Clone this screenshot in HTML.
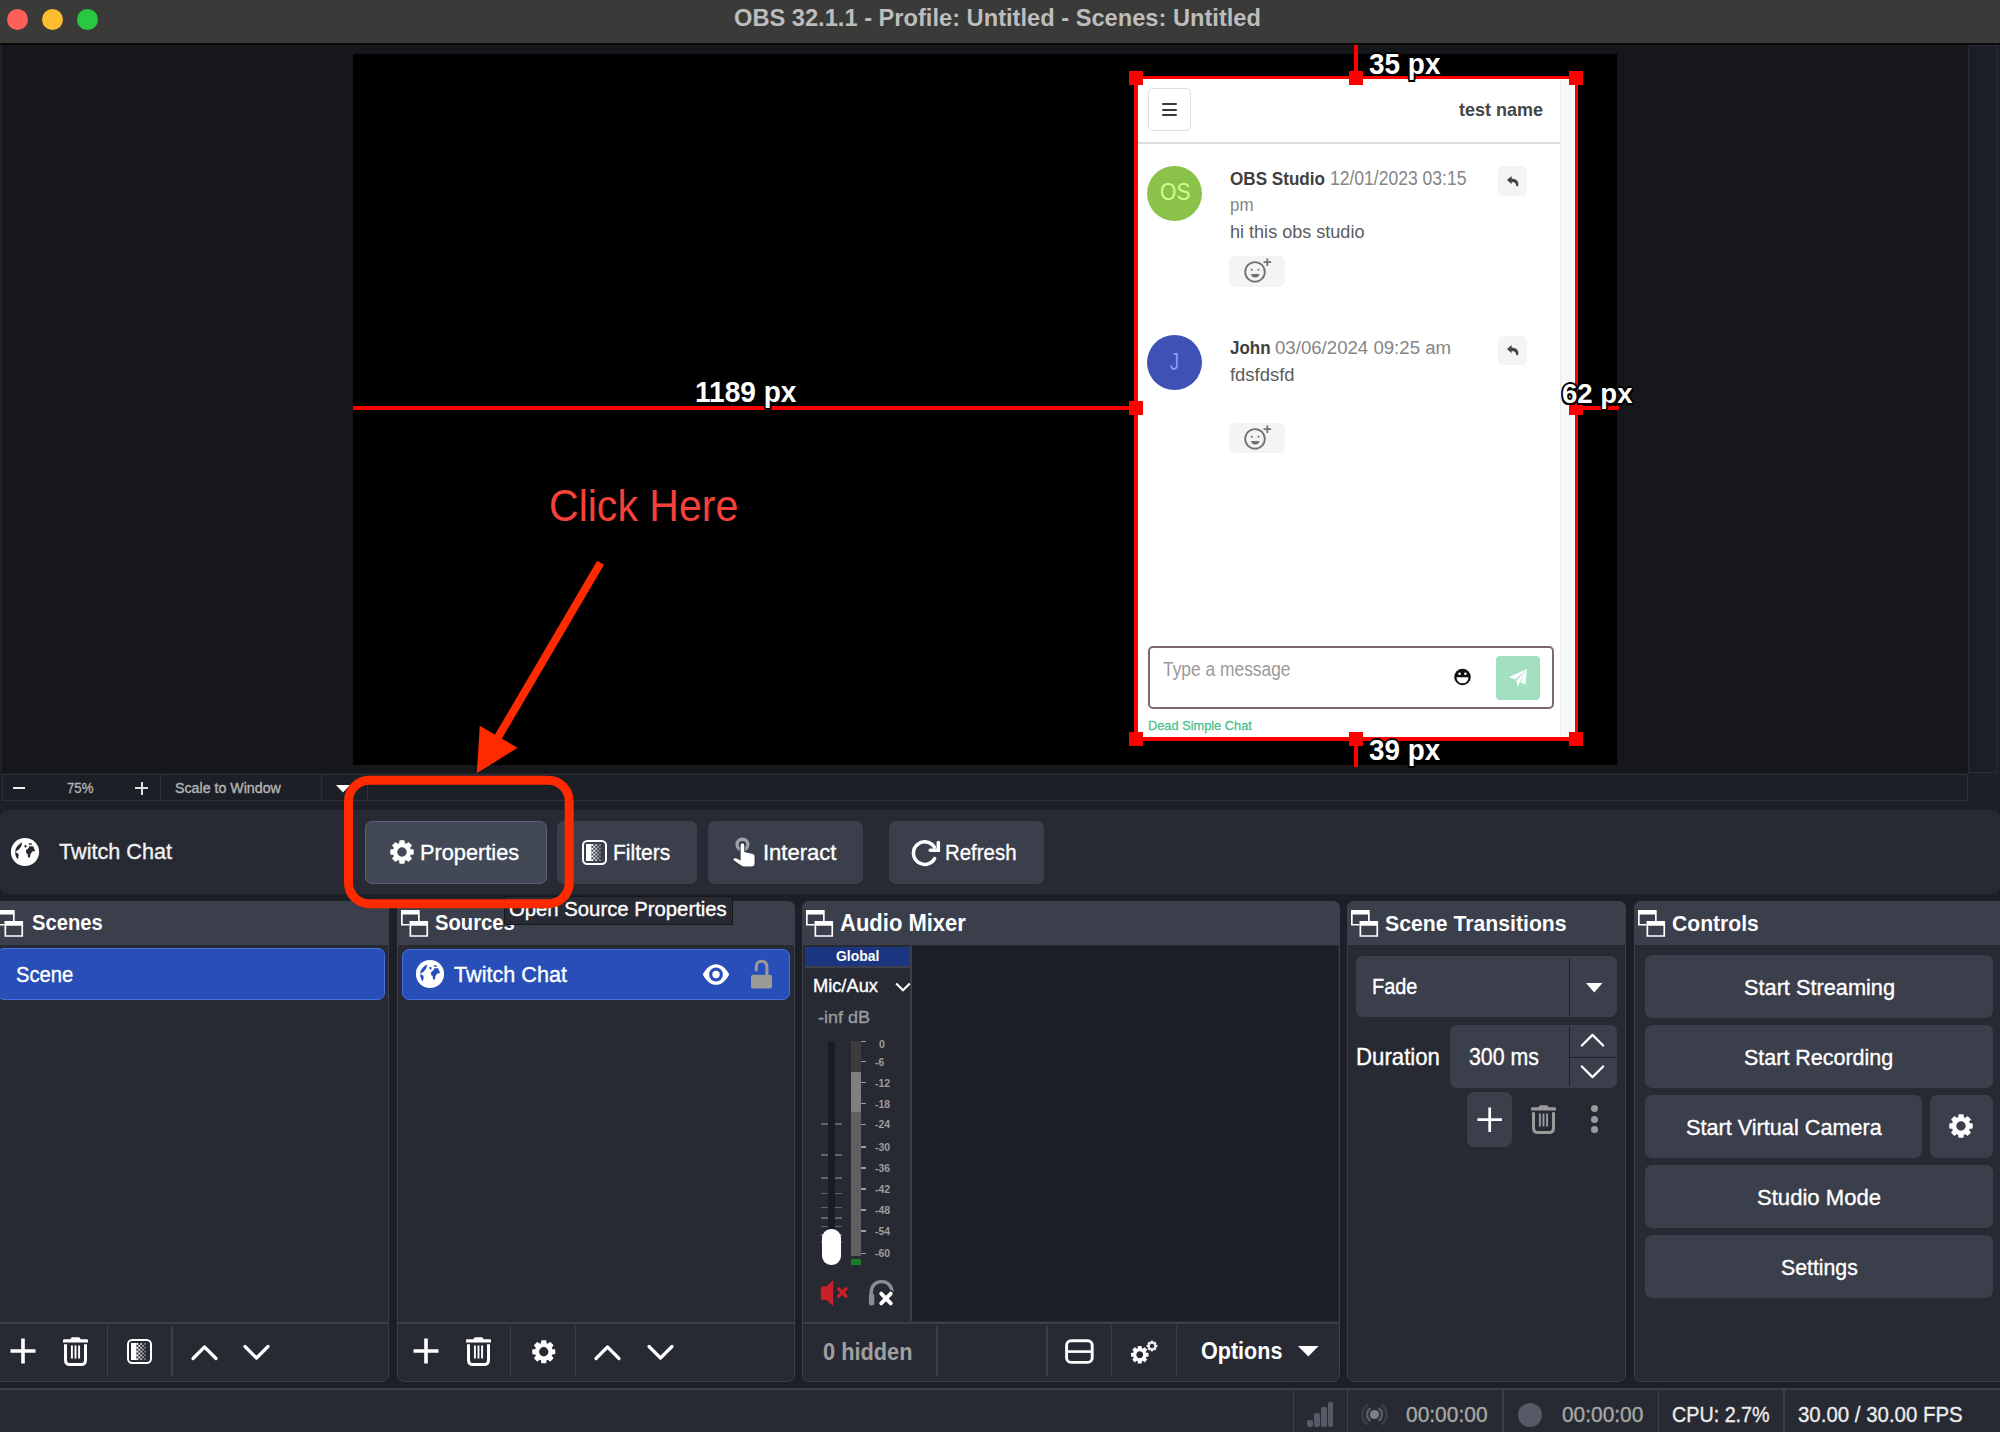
<!DOCTYPE html>
<html><head><meta charset="utf-8"><style>
*{box-sizing:border-box;margin:0;padding:0}
html,body{width:2000px;height:1432px;overflow:hidden;background:#1d1f26;font-family:"Liberation Sans",sans-serif;color:#fff}
.a{position:absolute}
.t{position:absolute;white-space:pre;line-height:0;transform-origin:0 0}
svg{position:absolute;overflow:visible}
.ui{-webkit-text-stroke:0.35px currentColor}
</style></head><body>
<div class="a" style="left:0px;top:0px;width:2000px;height:43px;background:#3a3a39;"></div>
<div class="a" style="left:0px;top:43px;width:2000px;height:2px;background:#0a0a0b;"></div>
<div class="a" style="left:7.0px;top:8.5px;width:21px;height:21px;border-radius:50%;background:#fe5f57"></div>
<div class="a" style="left:42.0px;top:8.5px;width:21px;height:21px;border-radius:50%;background:#febc2e"></div>
<div class="a" style="left:77.0px;top:8.5px;width:21px;height:21px;border-radius:50%;background:#28c840"></div>
<div class="t " style="left:734.00px;top:17.79px;font-size:23.40px;font-weight:bold;color:#bdbdbd;transform:scaleX(1.0110);">OBS 32.1.1 - Profile: Untitled - Scenes: Untitled</div>
<div class="a" style="left:0px;top:45px;width:1968px;height:728px;background:#16171b;"></div>
<div class="a" style="left:0px;top:45px;width:2px;height:728px;background:#1f2128;"></div>
<div class="a" style="left:1968px;top:45px;width:29px;height:728px;background:#1c1e25;border:1px solid #2a2c35;"></div>
<div class="a" style="left:353px;top:54px;width:1264px;height:711px;background:#000;"></div>
<div class="a" style="left:1138px;top:79px;width:437px;height:658.5px;background:#ffffff;"></div>
<div class="a" style="left:1560px;top:79px;width:15px;height:658.5px;background:#f7f7f7;border-left:1px solid #ebebeb;"></div>
<div class="a" style="left:1148px;top:88px;width:43px;height:43px;background:#fff;border:1px solid #dedede;border-radius:5px;"></div>
<div class="a" style="left:1162px;top:102.9px;width:15px;height:2.200000000000003px;background:#383838;border-radius:1px;"></div>
<div class="a" style="left:1162px;top:108.6px;width:15px;height:2.200000000000003px;background:#383838;border-radius:1px;"></div>
<div class="a" style="left:1162px;top:114.3px;width:15px;height:2.200000000000003px;background:#383838;border-radius:1px;"></div>
<div class="t " style="left:1459.00px;top:109.77px;font-size:17.99px;font-weight:bold;color:#454545;">test name</div>
<div class="a" style="left:1138px;top:141.5px;width:422px;height:2.5px;background:#dcdcdc;"></div>
<div class="a" style="left:1147.1px;top:165.7px;width:55px;height:55px;border-radius:50%;background:#8bc34a"></div>
<div class="t " style="left:1159.50px;top:191.69px;font-size:23.98px;font-weight:normal;color:#ccff90;transform:scaleX(0.8801);">OS</div>
<div class="t " style="left:1229.50px;top:178.95px;font-size:18.90px;font-weight:bold;color:#404040;transform:scaleX(0.9051);">OBS Studio</div>
<div class="t " style="left:1330.00px;top:179.10px;font-size:19.33px;font-weight:normal;color:#858585;transform:scaleX(0.9070);">12/01/2023 03:15</div>
<div class="t " style="left:1229.50px;top:205.37px;font-size:18.56px;font-weight:normal;color:#858585;transform:scaleX(0.9109);">pm</div>
<div class="t " style="left:1229.50px;top:232.08px;font-size:18.52px;font-weight:normal;color:#5c5c5c;transform:scaleX(0.9749);">hi this obs studio</div>
<div class="a" style="left:1497.5px;top:165.8px;width:29.5px;height:30.69999999999999px;background:#f4f4f4;border-radius:5px;"></div>
<svg style="left:1505.5px;top:174.5px" width="14" height="14" viewBox="0 0 14 14"><path d="M1 5.1 L5.6 0.9 V3.5 C9.7 3.6 12.5 5.6 12.4 9.4 L11.9 11.6 L10.1 10.8 C10.3 8.4 8.7 6.9 5.6 6.9 V9.3 Z" fill="#454545"/></svg>
<div class="a" style="left:1229px;top:256.1px;width:55.5px;height:30.69999999999999px;background:#f4f4f4;border-radius:6px;"></div>
<svg style="left:1244px;top:256.5px" width="32" height="28" viewBox="0 0 32 28"><circle cx="11" cy="14.9" r="9.8" fill="none" stroke="#727272" stroke-width="1.8"/><circle cx="7.8" cy="12.8" r="1.05" fill="#727272"/><circle cx="14.5" cy="12.8" r="1.05" fill="#727272"/><path d="M7.1 17.1 H15.4 Q15.2 20.6 11.25 20.6 Q7.3 20.6 7.1 17.1 Z" fill="#727272"/><path d="M23.3 1.4 V9 M19.5 5.2 H27.1" stroke="#727272" stroke-width="1.8"/></svg>
<div class="a" style="left:1147.1px;top:335.3px;width:55px;height:55px;border-radius:50%;background:#3f51b5"></div>
<div class="t " style="left:1170.00px;top:361.69px;font-size:23.98px;font-weight:normal;color:#8c9eff;transform:scaleX(0.7505);">J</div>
<div class="t " style="left:1229.50px;top:348.35px;font-size:19.19px;font-weight:bold;color:#404040;transform:scaleX(0.8832);">John</div>
<div class="t " style="left:1275.00px;top:348.35px;font-size:19.19px;font-weight:normal;color:#858585;transform:scaleX(0.9707);">03/06/2024 09:25 am</div>
<div class="a" style="left:1497.5px;top:335.6px;width:29.5px;height:29.0px;background:#f4f4f4;border-radius:5px;"></div>
<svg style="left:1505.5px;top:343.5px" width="14" height="14" viewBox="0 0 14 14"><path d="M1 5.1 L5.6 0.9 V3.5 C9.7 3.6 12.5 5.6 12.4 9.4 L11.9 11.6 L10.1 10.8 C10.3 8.4 8.7 6.9 5.6 6.9 V9.3 Z" fill="#454545"/></svg>
<div class="t " style="left:1229.50px;top:375.08px;font-size:18.52px;font-weight:normal;color:#5c5c5c;transform:scaleX(0.9951);">fdsfdsfd</div>
<div class="a" style="left:1229px;top:423.2px;width:55.5px;height:30.100000000000023px;background:#f4f4f4;border-radius:6px;"></div>
<svg style="left:1244px;top:423.6px" width="32" height="28" viewBox="0 0 32 28"><circle cx="11" cy="14.9" r="9.8" fill="none" stroke="#727272" stroke-width="1.8"/><circle cx="7.8" cy="12.8" r="1.05" fill="#727272"/><circle cx="14.5" cy="12.8" r="1.05" fill="#727272"/><path d="M7.1 17.1 H15.4 Q15.2 20.6 11.25 20.6 Q7.3 20.6 7.1 17.1 Z" fill="#727272"/><path d="M23.3 1.4 V9 M19.5 5.2 H27.1" stroke="#727272" stroke-width="1.8"/></svg>
<div class="a" style="left:1148px;top:645.7px;width:406px;height:63.299999999999955px;background:#fff;border:2px solid #7d6b6b;border-radius:5px;"></div>
<div class="t " style="left:1162.70px;top:668.95px;font-size:20.35px;font-weight:normal;color:#9a9a9a;transform:scaleX(0.8543);">Type a message</div>
<svg style="left:1453px;top:668px" width="19" height="18" viewBox="0 0 19 18"><circle cx="9.5" cy="9" r="8.3" fill="#111"/><path d="M3.5 9.2 H15.5 Q15 15.2 9.5 15.2 Q4 15.2 3.5 9.2Z" fill="#fff"/><circle cx="6.6" cy="5.8" r="1.3" fill="#fff"/><circle cx="12.4" cy="5.8" r="1.3" fill="#fff"/></svg>
<div class="a" style="left:1496px;top:656px;width:44px;height:44px;background:#a3e0c2;border-radius:4px;"></div>
<svg style="left:1508px;top:668px" width="20" height="20" viewBox="0 0 20 20"><path d="M19 1 L1 9 L7 11.5 Z M19 1 L8.5 12.5 L9.5 19 L12 14 Z M19 1 L12.5 14.5 L17.5 16.5Z" fill="#fff"/></svg>
<div class="t " style="left:1148.00px;top:726.42px;font-size:12.94px;font-weight:normal;color:#4fbf8f;transform:scaleX(0.9888);-webkit-text-stroke:0.3px #4fbf8f;">Dead Simple Chat</div>
<div class="a" style="left:2px;top:773.5px;width:1966px;height:27.5px;background:#1d1f26;border:1px solid #2d303a;"></div>
<div class="a" style="left:160px;top:775px;width:1.1999999999999886px;height:25px;background:#2d303a;"></div>
<div class="a" style="left:320.5px;top:775px;width:1.1999999999999886px;height:25px;background:#2d303a;"></div>
<div class="a" style="left:367px;top:775px;width:1.1999999999999886px;height:25px;background:#2d303a;"></div>
<div class="a" style="left:13px;top:787px;width:12px;height:2px;background:#f0f0f0;"></div>
<div class="t ui" style="left:66.60px;top:787.77px;font-size:13.95px;font-weight:normal;color:#b4b4b4;transform:scaleX(0.9460);">75%</div>
<div class="a" style="left:135px;top:787px;width:13px;height:2px;background:#e0e0e0;"></div>
<div class="a" style="left:140.5px;top:781.5px;width:2.0px;height:13.0px;background:#e0e0e0;"></div>
<div class="t ui" style="left:175.00px;top:787.77px;font-size:13.95px;font-weight:normal;color:#b4b4b4;transform:scaleX(1.0197);">Scale to Window</div>
<svg style="left:336px;top:785px" width="14" height="8" viewBox="0 0 14 8"><path d="M0 0 H14 L7 7.5Z" fill="#fff"/></svg>
<div class="a" style="left:0px;top:810px;width:2000px;height:84px;background:#272a33;border-radius:8px;"></div>
<svg style="left:10.5px;top:838px" width="28" height="28" viewBox="0 0 28 28"><circle cx="14" cy="14" r="14.1" fill="#fff"/><path d="M6.8 21.5 A10.5 10.5 0 0 1 11.2 4.6 L10.2 8.4 L7.8 11.4 L4.1 14.1 L7.2 15.5 L7.7 17.6 Z" fill="#272a33"/><ellipse cx="14.5" cy="8.25" rx="1" ry="1.4" fill="#272a33"/><path d="M17.7 5.3 H20.3 L21.3 6.8 H17.9 Z" fill="#272a33"/><path d="M18 8.25 H22.2 L24.1 13 L21.3 13.55 L19.4 16.35 L19.1 19.1 L18 20 L16.85 18.6 L16.6 15.8 L15.2 15.2 L14.9 12.2 L16.3 11.3 L18 9.6 Z" fill="#272a33"/></svg>
<div class="t ui" style="left:59.40px;top:851.94px;font-size:22.09px;font-weight:normal;color:#f2f2f2;transform:scaleX(0.9806);">Twitch Chat</div>
<div class="a" style="left:365px;top:821px;width:182px;height:63px;background:#434856;border:1.5px solid #5b6176;border-radius:7px;"></div>
<svg style="left:388.6px;top:838.9px" width="26" height="26" viewBox="-14 -14 28 28"><path d="M-2.17 -8.73 L-1.95 -11.74 L1.95 -11.74 L2.17 -8.73 L4.64 -7.71 L6.92 -9.68 L9.68 -6.92 L7.71 -4.64 L8.73 -2.17 L11.74 -1.95 L11.74 1.95 L8.73 2.17 L7.71 4.64 L9.68 6.92 L6.92 9.68 L4.64 7.71 L2.17 8.73 L1.95 11.74 L-1.95 11.74 L-2.17 8.73 L-4.64 7.71 L-6.92 9.68 L-9.68 6.92 L-7.71 4.64 L-8.73 2.17 L-11.74 1.95 L-11.74 -1.95 L-8.73 -2.17 L-7.71 -4.64 L-9.68 -6.92 L-6.92 -9.68 L-4.64 -7.71Z M6.0 0 A6.0 6.0 0 1 0 -6.0 0 A6.0 6.0 0 1 0 6.0 0Z" fill="#fff" fill-rule="evenodd" stroke="#fff" stroke-width="1.8" stroke-linejoin="round"/></svg>
<div class="t ui" style="left:420.30px;top:852.29px;font-size:22.82px;font-weight:normal;color:#ffffff;transform:scaleX(0.9533);">Properties</div>
<div class="a" style="left:557px;top:821px;width:140px;height:63px;background:#3b3e4b;border-radius:7px;"></div>
<svg style="left:581.5px;top:840px" width="25" height="25" viewBox="0 0 25 25"><rect x="1" y="1" width="23" height="23" rx="4.2" fill="none" stroke="#fff" stroke-width="2"/><rect x="4" y="4" width="5.4" height="17" fill="#fff"/><rect x="9.4" y="4.0" width="1.9" height="1.9" fill="#fff" fill-opacity="1"/><rect x="13.2" y="4.0" width="1.9" height="1.9" fill="#fff" fill-opacity="0.7"/><rect x="17.0" y="4.0" width="1.9" height="1.9" fill="#fff" fill-opacity="0.35"/><rect x="11.3" y="5.9" width="1.9" height="1.9" fill="#fff" fill-opacity="0.9"/><rect x="15.1" y="5.9" width="1.9" height="1.9" fill="#fff" fill-opacity="0.5"/><rect x="9.4" y="7.8" width="1.9" height="1.9" fill="#fff" fill-opacity="1"/><rect x="13.2" y="7.8" width="1.9" height="1.9" fill="#fff" fill-opacity="0.7"/><rect x="17.0" y="7.8" width="1.9" height="1.9" fill="#fff" fill-opacity="0.35"/><rect x="11.3" y="9.7" width="1.9" height="1.9" fill="#fff" fill-opacity="0.9"/><rect x="15.1" y="9.7" width="1.9" height="1.9" fill="#fff" fill-opacity="0.5"/><rect x="9.4" y="11.6" width="1.9" height="1.9" fill="#fff" fill-opacity="1"/><rect x="13.2" y="11.6" width="1.9" height="1.9" fill="#fff" fill-opacity="0.7"/><rect x="17.0" y="11.6" width="1.9" height="1.9" fill="#fff" fill-opacity="0.35"/><rect x="11.3" y="13.5" width="1.9" height="1.9" fill="#fff" fill-opacity="0.9"/><rect x="15.1" y="13.5" width="1.9" height="1.9" fill="#fff" fill-opacity="0.5"/><rect x="9.4" y="15.4" width="1.9" height="1.9" fill="#fff" fill-opacity="1"/><rect x="13.2" y="15.4" width="1.9" height="1.9" fill="#fff" fill-opacity="0.7"/><rect x="17.0" y="15.4" width="1.9" height="1.9" fill="#fff" fill-opacity="0.35"/><rect x="11.3" y="17.3" width="1.9" height="1.9" fill="#fff" fill-opacity="0.9"/><rect x="15.1" y="17.3" width="1.9" height="1.9" fill="#fff" fill-opacity="0.5"/><rect x="9.4" y="19.2" width="1.9" height="1.9" fill="#fff" fill-opacity="1"/><rect x="13.2" y="19.2" width="1.9" height="1.9" fill="#fff" fill-opacity="0.7"/><rect x="17.0" y="19.2" width="1.9" height="1.9" fill="#fff" fill-opacity="0.35"/></svg>
<div class="t ui" style="left:612.50px;top:852.29px;font-size:22.82px;font-weight:normal;color:#ffffff;transform:scaleX(0.9232);">Filters</div>
<div class="a" style="left:707.5px;top:821px;width:155.5px;height:63px;background:#3b3e4b;border-radius:7px;"></div>
<svg style="left:732px;top:837px" width="24" height="31" viewBox="0 0 24 31"><circle cx="10.45" cy="7.6" r="5.4" fill="none" stroke="#9ea1aa" stroke-width="3.4"/><path d="M8.6 8 A1.85 1.85 0 0 1 12.3 8 V15 L21 17 Q22.6 17.4 22.6 19 V26.5 Q22.6 29.4 19.7 29.4 H11.5 Q10.2 29.4 9.2 28.6 L2 23.5 Q0.8 22.5 1.8 21.5 Q2.8 20.6 4.2 21.3 L8.6 23.5 Z" fill="#fff" stroke="#2a2d38" stroke-width="1.6" paint-order="stroke"/></svg>
<div class="t ui" style="left:762.50px;top:852.29px;font-size:22.82px;font-weight:normal;color:#ffffff;transform:scaleX(0.9658);">Interact</div>
<div class="a" style="left:889.2px;top:821px;width:155.0px;height:63px;background:#3b3e4b;border-radius:7px;"></div>
<svg style="left:910px;top:838px" width="32" height="30" viewBox="0 0 32 30"><path d="M24.4 9.2 A11.3 11.3 0 1 0 24.6 20.6" fill="none" stroke="#fff" stroke-width="3.5" stroke-linecap="round"/><path d="M20.2 12.3 H28.3 V4.6" fill="none" stroke="#fff" stroke-width="3.5" stroke-linecap="round" stroke-linejoin="miter"/></svg>
<div class="t ui" style="left:945.00px;top:852.29px;font-size:22.82px;font-weight:normal;color:#ffffff;transform:scaleX(0.8952);">Refresh</div>
<div class="a" style="left:-6.5px;top:901px;width:395.0px;height:480.5px;background:#272a33;border:1.5px solid #3b3e4b;border-radius:7px;"></div>
<div class="a" style="left:-6.5px;top:901px;width:395.0px;height:44px;background:#3b3e4b;border-radius:7px 7px 0 0;"></div>
<svg style="left:-3.5999999999999996px;top:910.3px" width="28" height="28" viewBox="0 0 28 28"><path d="M0 0 H18.7 V15.5 H0Z M1.7 4.5 V14 H17 V4.5Z" fill="#fff" fill-rule="evenodd"/><rect x="8.5" y="11.1" width="18.6" height="15.6" fill="#3b3e4b"/><path d="M8.5 11.1 H27.1 V26.7 H8.5Z M10.2 15.7 V25.2 H25.4 V15.7Z" fill="#fff" fill-rule="evenodd"/></svg>
<div class="t " style="left:31.50px;top:923.20px;font-size:21.95px;font-weight:bold;color:#fff;transform:scaleX(0.9204);">Scenes</div>
<div class="a" style="left:-3px;top:948px;width:387.5px;height:51.5px;background:#284fb8;border:1.5px solid #4570e0;border-radius:7px;"></div>
<div class="t ui" style="left:15.80px;top:973.94px;font-size:22.97px;font-weight:normal;color:#fff;transform:scaleX(0.8801);">Scene</div>
<div class="a" style="left:397px;top:901px;width:398px;height:480.5px;background:#272a33;border:1.5px solid #3b3e4b;border-radius:7px;"></div>
<div class="a" style="left:397px;top:901px;width:398px;height:44px;background:#3b3e4b;border-radius:7px 7px 0 0;"></div>
<svg style="left:400.9px;top:910.3px" width="28" height="28" viewBox="0 0 28 28"><path d="M0 0 H18.7 V15.5 H0Z M1.7 4.5 V14 H17 V4.5Z" fill="#fff" fill-rule="evenodd"/><rect x="8.5" y="11.1" width="18.6" height="15.6" fill="#3b3e4b"/><path d="M8.5 11.1 H27.1 V26.7 H8.5Z M10.2 15.7 V25.2 H25.4 V15.7Z" fill="#fff" fill-rule="evenodd"/></svg>
<div class="t " style="left:435.00px;top:923.20px;font-size:21.95px;font-weight:bold;color:#fff;transform:scaleX(0.9205);">Sources</div>
<div class="a" style="left:402px;top:948.6px;width:387.5px;height:51.89999999999998px;background:#284fb8;border:1.5px solid #4570e0;border-radius:7px;"></div>
<svg style="left:416px;top:960.4px" width="28" height="28" viewBox="0 0 28 28"><circle cx="14" cy="14" r="14.1" fill="#fff"/><path d="M6.8 21.5 A10.5 10.5 0 0 1 11.2 4.6 L10.2 8.4 L7.8 11.4 L4.1 14.1 L7.2 15.5 L7.7 17.6 Z" fill="#284fb8"/><ellipse cx="14.5" cy="8.25" rx="1" ry="1.4" fill="#284fb8"/><path d="M17.7 5.3 H20.3 L21.3 6.8 H17.9 Z" fill="#284fb8"/><path d="M18 8.25 H22.2 L24.1 13 L21.3 13.55 L19.4 16.35 L19.1 19.1 L18 20 L16.85 18.6 L16.6 15.8 L15.2 15.2 L14.9 12.2 L16.3 11.3 L18 9.6 Z" fill="#284fb8"/></svg>
<div class="t ui" style="left:454.40px;top:974.59px;font-size:22.24px;font-weight:normal;color:#fff;transform:scaleX(0.9734);">Twitch Chat</div>
<svg style="left:702px;top:963px" width="28" height="23" viewBox="0 0 28 23"><path d="M0.8 11.5 C4.5 4.5 9 1.2 14 1.2 C19 1.2 23.5 4.5 27.2 11.5 C23.5 18.5 19 21.8 14 21.8 C9 21.8 4.5 18.5 0.8 11.5Z" fill="#fff"/><circle cx="14" cy="11.5" r="6.9" fill="#284fb8"/><circle cx="14" cy="11.5" r="3.7" fill="#fff"/></svg>
<svg style="left:750px;top:959px" width="23" height="31" viewBox="0 0 23 31"><path d="M6.3 11 V7.8 C6.3 4.2 8.6 2.2 11.6 2.2 C14.6 2.2 16.9 4.2 16.9 7.8 V16.5" fill="none" stroke="#9c9b96" stroke-width="3" stroke-linecap="round"/><rect x="1" y="15.8" width="21" height="13.8" rx="2.4" fill="#9c9b96"/></svg>
<div class="a" style="left:504px;top:896px;width:228.5px;height:28.5px;background:#272a33;border:1px solid #17181d;"></div>
<div class="t ui" style="left:508.70px;top:908.75px;font-size:19.77px;font-weight:normal;color:#ffffff;transform:scaleX(1.0269);">Open Source Properties</div>
<div class="a" style="left:-5px;top:1322.2px;width:392.5px;height:1.599999999999909px;background:#3b3e4b;"></div>
<div class="a" style="left:106.9px;top:1326px;width:1.1999999999999886px;height:50px;background:#3b3e4b;"></div>
<div class="a" style="left:171.4px;top:1326px;width:1.1999999999999886px;height:50px;background:#3b3e4b;"></div>
<svg style="left:9.6px;top:1338.4px" width="26" height="26" viewBox="0 0 26 26"><path d="M13 0.5 V25.5 M0.5 13 H25.5" stroke="#fff" stroke-width="3.6"/></svg>
<svg style="left:62px;top:1336.8px" width="27" height="29" viewBox="0 0 27 29"><path d="M1 3.4 C1 2.6 1.6 2.2 2.4 2.2 H8.5 C8.8 0.8 9.6 0.2 11 0.2 H16 C17.4 0.2 18.2 0.8 18.5 2.2 H24.6 C25.4 2.2 26 2.6 26 3.4 V5.4 H1Z" fill="#fff"/><path d="M3.5 7.2 V23 C3.5 26.2 5.2 27.6 8 27.6 H19 C21.8 27.6 23.5 26.2 23.5 23 V7.2" fill="none" stroke="#fff" stroke-width="3"/><path d="M9.9 8.5 V21.5 M13.5 8.5 V21.5 M17.1 8.5 V21.5" stroke="#fff" stroke-width="1.9"/></svg>
<svg style="left:127px;top:1339px" width="25" height="25" viewBox="0 0 25 25"><rect x="1" y="1" width="23" height="23" rx="4.2" fill="none" stroke="#fff" stroke-width="2"/><rect x="4" y="4" width="5.4" height="17" fill="#fff"/><rect x="9.4" y="4.0" width="1.9" height="1.9" fill="#fff" fill-opacity="1"/><rect x="13.2" y="4.0" width="1.9" height="1.9" fill="#fff" fill-opacity="0.7"/><rect x="17.0" y="4.0" width="1.9" height="1.9" fill="#fff" fill-opacity="0.35"/><rect x="11.3" y="5.9" width="1.9" height="1.9" fill="#fff" fill-opacity="0.9"/><rect x="15.1" y="5.9" width="1.9" height="1.9" fill="#fff" fill-opacity="0.5"/><rect x="9.4" y="7.8" width="1.9" height="1.9" fill="#fff" fill-opacity="1"/><rect x="13.2" y="7.8" width="1.9" height="1.9" fill="#fff" fill-opacity="0.7"/><rect x="17.0" y="7.8" width="1.9" height="1.9" fill="#fff" fill-opacity="0.35"/><rect x="11.3" y="9.7" width="1.9" height="1.9" fill="#fff" fill-opacity="0.9"/><rect x="15.1" y="9.7" width="1.9" height="1.9" fill="#fff" fill-opacity="0.5"/><rect x="9.4" y="11.6" width="1.9" height="1.9" fill="#fff" fill-opacity="1"/><rect x="13.2" y="11.6" width="1.9" height="1.9" fill="#fff" fill-opacity="0.7"/><rect x="17.0" y="11.6" width="1.9" height="1.9" fill="#fff" fill-opacity="0.35"/><rect x="11.3" y="13.5" width="1.9" height="1.9" fill="#fff" fill-opacity="0.9"/><rect x="15.1" y="13.5" width="1.9" height="1.9" fill="#fff" fill-opacity="0.5"/><rect x="9.4" y="15.4" width="1.9" height="1.9" fill="#fff" fill-opacity="1"/><rect x="13.2" y="15.4" width="1.9" height="1.9" fill="#fff" fill-opacity="0.7"/><rect x="17.0" y="15.4" width="1.9" height="1.9" fill="#fff" fill-opacity="0.35"/><rect x="11.3" y="17.3" width="1.9" height="1.9" fill="#fff" fill-opacity="0.9"/><rect x="15.1" y="17.3" width="1.9" height="1.9" fill="#fff" fill-opacity="0.5"/><rect x="9.4" y="19.2" width="1.9" height="1.9" fill="#fff" fill-opacity="1"/><rect x="13.2" y="19.2" width="1.9" height="1.9" fill="#fff" fill-opacity="0.7"/><rect x="17.0" y="19.2" width="1.9" height="1.9" fill="#fff" fill-opacity="0.35"/></svg>
<svg style="left:190.5px;top:1343.5px" width="27" height="17" viewBox="0 0 27 17"><path d="M2 14.5 L13.5 3 L25 14.5" fill="none" stroke="#fff" stroke-width="3.2" stroke-linecap="round" stroke-linejoin="round"/></svg>
<svg style="left:243px;top:1343.5px" width="27" height="17" viewBox="0 0 27 17"><path d="M2 2.5 L13.5 14 L25 2.5" fill="none" stroke="#fff" stroke-width="3.2" stroke-linecap="round" stroke-linejoin="round"/></svg>
<div class="a" style="left:398px;top:1322.2px;width:396px;height:1.599999999999909px;background:#3b3e4b;"></div>
<div class="a" style="left:510.2px;top:1326px;width:1.2000000000000455px;height:50px;background:#3b3e4b;"></div>
<div class="a" style="left:574.8px;top:1326px;width:1.2000000000000455px;height:50px;background:#3b3e4b;"></div>
<svg style="left:413px;top:1338.4px" width="26" height="26" viewBox="0 0 26 26"><path d="M13 0.5 V25.5 M0.5 13 H25.5" stroke="#fff" stroke-width="3.6"/></svg>
<svg style="left:465px;top:1336.8px" width="27" height="29" viewBox="0 0 27 29"><path d="M1 3.4 C1 2.6 1.6 2.2 2.4 2.2 H8.5 C8.8 0.8 9.6 0.2 11 0.2 H16 C17.4 0.2 18.2 0.8 18.5 2.2 H24.6 C25.4 2.2 26 2.6 26 3.4 V5.4 H1Z" fill="#fff"/><path d="M3.5 7.2 V23 C3.5 26.2 5.2 27.6 8 27.6 H19 C21.8 27.6 23.5 26.2 23.5 23 V7.2" fill="none" stroke="#fff" stroke-width="3"/><path d="M9.9 8.5 V21.5 M13.5 8.5 V21.5 M17.1 8.5 V21.5" stroke="#fff" stroke-width="1.9"/></svg>
<svg style="left:530.5px;top:1339px" width="25.5" height="25.5" viewBox="-14 -14 28 28"><path d="M-2.17 -8.73 L-1.95 -11.74 L1.95 -11.74 L2.17 -8.73 L4.64 -7.71 L6.92 -9.68 L9.68 -6.92 L7.71 -4.64 L8.73 -2.17 L11.74 -1.95 L11.74 1.95 L8.73 2.17 L7.71 4.64 L9.68 6.92 L6.92 9.68 L4.64 7.71 L2.17 8.73 L1.95 11.74 L-1.95 11.74 L-2.17 8.73 L-4.64 7.71 L-6.92 9.68 L-9.68 6.92 L-7.71 4.64 L-8.73 2.17 L-11.74 1.95 L-11.74 -1.95 L-8.73 -2.17 L-7.71 -4.64 L-9.68 -6.92 L-6.92 -9.68 L-4.64 -7.71Z M6.0 0 A6.0 6.0 0 1 0 -6.0 0 A6.0 6.0 0 1 0 6.0 0Z" fill="#fff" fill-rule="evenodd" stroke="#fff" stroke-width="1.8" stroke-linejoin="round"/></svg>
<svg style="left:594.3px;top:1343.5px" width="27" height="17" viewBox="0 0 27 17"><path d="M2 14.5 L13.5 3 L25 14.5" fill="none" stroke="#fff" stroke-width="3.2" stroke-linecap="round" stroke-linejoin="round"/></svg>
<svg style="left:646.7px;top:1343.5px" width="27" height="17" viewBox="0 0 27 17"><path d="M2 2.5 L13.5 14 L25 2.5" fill="none" stroke="#fff" stroke-width="3.2" stroke-linecap="round" stroke-linejoin="round"/></svg>
<div class="a" style="left:802px;top:901px;width:537.5px;height:480.5px;background:#272a33;border:1.5px solid #3b3e4b;border-radius:7px;"></div>
<div class="a" style="left:802px;top:901px;width:537.5px;height:44px;background:#3b3e4b;border-radius:7px 7px 0 0;"></div>
<svg style="left:805.7px;top:910.3px" width="28" height="28" viewBox="0 0 28 28"><path d="M0 0 H18.7 V15.5 H0Z M1.7 4.5 V14 H17 V4.5Z" fill="#fff" fill-rule="evenodd"/><rect x="8.5" y="11.1" width="18.6" height="15.6" fill="#3b3e4b"/><path d="M8.5 11.1 H27.1 V26.7 H8.5Z M10.2 15.7 V25.2 H25.4 V15.7Z" fill="#fff" fill-rule="evenodd"/></svg>
<div class="t " style="left:840.00px;top:923.34px;font-size:23.84px;font-weight:bold;color:#fff;transform:scaleX(0.9233);">Audio Mixer</div>
<div class="a" style="left:911px;top:946px;width:427px;height:375px;background:#1d1f27;"></div>
<div class="a" style="left:910px;top:946px;width:1.5px;height:375px;background:#3b3e4b;"></div>
<div class="a" style="left:805px;top:946.6px;width:105px;height:19.600000000000023px;background:#1c3580;"></div>
<div class="a" style="left:805px;top:966.2px;width:105px;height:1.7999999999999545px;background:#3d404c;"></div>
<div class="t " style="left:835.50px;top:956.31px;font-size:14.68px;font-weight:bold;color:#fff;transform:scaleX(0.9506);">Global</div>
<div class="t ui" style="left:812.90px;top:985.55px;font-size:18.31px;font-weight:normal;color:#fff;">Mic/Aux</div>
<svg style="left:895px;top:982px" width="16" height="10" viewBox="0 0 16 10"><path d="M1.2 1.5 L8 8.3 L14.8 1.5" fill="none" stroke="#fff" stroke-width="2.2"/></svg>
<div class="t ui" style="left:817.90px;top:1018.06px;font-size:16.86px;font-weight:normal;color:#9b9b9b;transform:scaleX(1.0651);">-inf dB</div>
<div class="a" style="left:828px;top:1041px;width:7px;height:199px;background:#1a1c22;border-radius:3.5px;"></div>
<div class="a" style="left:821px;top:1123.4px;width:7px;height:1.199999999999818px;background:#5c6475;"></div>
<div class="a" style="left:835px;top:1123.4px;width:7px;height:1.199999999999818px;background:#5c6475;"></div>
<div class="a" style="left:821px;top:1154.4px;width:7px;height:1.199999999999818px;background:#5c6475;"></div>
<div class="a" style="left:835px;top:1154.4px;width:7px;height:1.199999999999818px;background:#5c6475;"></div>
<div class="a" style="left:821px;top:1177.4px;width:7px;height:1.199999999999818px;background:#5c6475;"></div>
<div class="a" style="left:835px;top:1177.4px;width:7px;height:1.199999999999818px;background:#5c6475;"></div>
<div class="a" style="left:821px;top:1192.9px;width:7px;height:1.199999999999818px;background:#5c6475;"></div>
<div class="a" style="left:835px;top:1192.9px;width:7px;height:1.199999999999818px;background:#5c6475;"></div>
<div class="a" style="left:821px;top:1206.9px;width:7px;height:1.199999999999818px;background:#5c6475;"></div>
<div class="a" style="left:835px;top:1206.9px;width:7px;height:1.199999999999818px;background:#5c6475;"></div>
<div class="a" style="left:821px;top:1217.4px;width:7px;height:1.199999999999818px;background:#5c6475;"></div>
<div class="a" style="left:835px;top:1217.4px;width:7px;height:1.199999999999818px;background:#5c6475;"></div>
<div class="a" style="left:821px;top:1225.9px;width:7px;height:1.199999999999818px;background:#5c6475;"></div>
<div class="a" style="left:835px;top:1225.9px;width:7px;height:1.199999999999818px;background:#5c6475;"></div>
<div class="a" style="left:821px;top:1234.4px;width:7px;height:1.199999999999818px;background:#5c6475;"></div>
<div class="a" style="left:835px;top:1234.4px;width:7px;height:1.199999999999818px;background:#5c6475;"></div>
<div class="a" style="left:821px;top:1241.4px;width:7px;height:1.199999999999818px;background:#5c6475;"></div>
<div class="a" style="left:835px;top:1241.4px;width:7px;height:1.199999999999818px;background:#5c6475;"></div>
<div class="a" style="left:822px;top:1229px;width:18.5px;height:36px;background:#ffffff;border-radius:9px;"></div>
<div class="a" style="left:850.6px;top:1041px;width:10.100000000000023px;height:31px;background:#3c3c3c;"></div>
<div class="a" style="left:850.6px;top:1072px;width:10.100000000000023px;height:40px;background:#808080;"></div>
<div class="a" style="left:850.6px;top:1112px;width:10.100000000000023px;height:144px;background:#5f5f5f;"></div>
<div class="a" style="left:850.6px;top:1259px;width:10.100000000000023px;height:5.5px;background:#1d7a2a;"></div>
<div class="a" style="left:861px;top:1040.75px;width:4.7999999999999545px;height:1.300000000000182px;background:#9c9c9c;"></div>
<div class="t " style="left:878.50px;top:1044.22px;font-size:11.19px;font-weight:bold;color:#9c9c9c;transform:scaleX(0.9499);">0</div>
<div class="a" style="left:861px;top:1061.1499999999999px;width:4.7999999999999545px;height:1.300000000000182px;background:#9c9c9c;"></div>
<div class="t " style="left:875.20px;top:1061.72px;font-size:11.19px;font-weight:bold;color:#9c9c9c;transform:scaleX(0.9236);">-6</div>
<div class="a" style="left:861px;top:1082.1499999999999px;width:4.7999999999999545px;height:1.300000000000182px;background:#9c9c9c;"></div>
<div class="t " style="left:875.20px;top:1082.72px;font-size:11.19px;font-weight:bold;color:#9c9c9c;transform:scaleX(0.9337);">-12</div>
<div class="a" style="left:861px;top:1103.05px;width:4.7999999999999545px;height:1.300000000000182px;background:#9c9c9c;"></div>
<div class="t " style="left:875.20px;top:1103.62px;font-size:11.19px;font-weight:bold;color:#9c9c9c;transform:scaleX(0.9337);">-18</div>
<div class="a" style="left:861px;top:1123.85px;width:4.7999999999999545px;height:1.300000000000182px;background:#9c9c9c;"></div>
<div class="t " style="left:875.20px;top:1124.42px;font-size:11.19px;font-weight:bold;color:#9c9c9c;transform:scaleX(0.9337);">-24</div>
<div class="a" style="left:861px;top:1146.35px;width:4.7999999999999545px;height:1.300000000000182px;background:#9c9c9c;"></div>
<div class="t " style="left:875.20px;top:1146.92px;font-size:11.19px;font-weight:bold;color:#9c9c9c;transform:scaleX(0.9337);">-30</div>
<div class="a" style="left:861px;top:1167.35px;width:4.7999999999999545px;height:1.300000000000182px;background:#9c9c9c;"></div>
<div class="t " style="left:875.20px;top:1167.92px;font-size:11.19px;font-weight:bold;color:#9c9c9c;transform:scaleX(0.9337);">-36</div>
<div class="a" style="left:861px;top:1188.35px;width:4.7999999999999545px;height:1.300000000000182px;background:#9c9c9c;"></div>
<div class="t " style="left:875.20px;top:1188.92px;font-size:11.19px;font-weight:bold;color:#9c9c9c;transform:scaleX(0.9337);">-42</div>
<div class="a" style="left:861px;top:1209.35px;width:4.7999999999999545px;height:1.300000000000182px;background:#9c9c9c;"></div>
<div class="t " style="left:875.20px;top:1209.92px;font-size:11.19px;font-weight:bold;color:#9c9c9c;transform:scaleX(0.9337);">-48</div>
<div class="a" style="left:861px;top:1230.35px;width:4.7999999999999545px;height:1.300000000000182px;background:#9c9c9c;"></div>
<div class="t " style="left:875.20px;top:1230.92px;font-size:11.19px;font-weight:bold;color:#9c9c9c;transform:scaleX(0.9337);">-54</div>
<div class="a" style="left:861px;top:1252.85px;width:4.7999999999999545px;height:1.300000000000182px;background:#9c9c9c;"></div>
<div class="t " style="left:875.20px;top:1253.42px;font-size:11.19px;font-weight:bold;color:#9c9c9c;transform:scaleX(0.9337);">-60</div>
<svg style="left:820px;top:1279px" width="30" height="28" viewBox="0 0 30 28"><path d="M3.4 7.2 H6.6 L13.2 1 V27.2 L6.6 21 H3.4 Q0.8 21 0.8 18.4 V9.8 Q0.8 7.2 3.4 7.2 Z" fill="#c9202a"/><path d="M18.6 9.8 L26 17.2 M26 9.8 L18.6 17.2" stroke="#d11f2a" stroke-width="3.2" stroke-linecap="round"/></svg>
<svg style="left:867px;top:1278px" width="30" height="30" viewBox="0 0 30 30"><path d="M4.2 24 V14.5 C4.2 7.6 8.6 3.6 14.6 3.6 C20.6 3.6 25 7.6 25 14.5 V16.5" fill="none" stroke="#8a8c94" stroke-width="3.4" stroke-linecap="round"/><rect x="1.9" y="15.6" width="5.4" height="12" rx="2.4" fill="#8a8c94"/><path d="M14.2 15.6 L23.8 25.4 M23.8 15.6 L14.2 25.4" stroke="#262932" stroke-width="6.8" stroke-linecap="round"/><path d="M14.2 15.6 L23.8 25.4 M23.8 15.6 L14.2 25.4" stroke="#fff" stroke-width="3.8" stroke-linecap="round"/></svg>
<div class="a" style="left:803px;top:1322.2px;width:535.5px;height:1.599999999999909px;background:#3b3e4b;"></div>
<div class="a" style="left:936.4px;top:1326px;width:1.2000000000000455px;height:50px;background:#3b3e4b;"></div>
<div class="a" style="left:1046.4px;top:1326px;width:1.199999999999818px;height:50px;background:#3b3e4b;"></div>
<div class="a" style="left:1111.0px;top:1326px;width:1.199999999999818px;height:50px;background:#3b3e4b;"></div>
<div class="a" style="left:1175.8000000000002px;top:1326px;width:1.199999999999818px;height:50px;background:#3b3e4b;"></div>
<div class="t " style="left:822.75px;top:1351.82px;font-size:23.62px;font-weight:bold;color:#a0a0a0;transform:scaleX(0.9220);">0 hidden</div>
<svg style="left:1064px;top:1339px" width="31" height="26" viewBox="0 0 31 26"><rect x="2.6" y="1.8" width="25.6" height="21.6" rx="4.5" fill="none" stroke="#fff" stroke-width="2.9"/><path d="M2.6 12.6 H28.2" stroke="#fff" stroke-width="2.6"/></svg>
<svg style="left:1129.5px;top:1344.5px" width="19.5" height="19.5" viewBox="-14 -14 28 28"><path d="M-2.12 -8.54 L-1.95 -11.74 L1.95 -11.74 L2.12 -8.54 L4.54 -7.54 L6.92 -9.68 L9.68 -6.92 L7.54 -4.54 L8.54 -2.12 L11.74 -1.95 L11.74 1.95 L8.54 2.12 L7.54 4.54 L9.68 6.92 L6.92 9.68 L4.54 7.54 L2.12 8.54 L1.95 11.74 L-1.95 11.74 L-2.12 8.54 L-4.54 7.54 L-6.92 9.68 L-9.68 6.92 L-7.54 4.54 L-8.54 2.12 L-11.74 1.95 L-11.74 -1.95 L-8.54 -2.12 L-7.54 -4.54 L-9.68 -6.92 L-6.92 -9.68 L-4.54 -7.54Z M5.8 0 A5.8 5.8 0 1 0 -5.8 0 A5.8 5.8 0 1 0 5.8 0Z" fill="#fff" fill-rule="evenodd" stroke="#fff" stroke-width="1.8" stroke-linejoin="round"/></svg>
<svg style="left:1146px;top:1339.7px" width="12" height="12" viewBox="-14 -14 28 28"><path d="M-2.12 -8.54 L-1.95 -11.74 L1.95 -11.74 L2.12 -8.54 L4.54 -7.54 L6.92 -9.68 L9.68 -6.92 L7.54 -4.54 L8.54 -2.12 L11.74 -1.95 L11.74 1.95 L8.54 2.12 L7.54 4.54 L9.68 6.92 L6.92 9.68 L4.54 7.54 L2.12 8.54 L1.95 11.74 L-1.95 11.74 L-2.12 8.54 L-4.54 7.54 L-6.92 9.68 L-9.68 6.92 L-7.54 4.54 L-8.54 2.12 L-11.74 1.95 L-11.74 -1.95 L-8.54 -2.12 L-7.54 -4.54 L-9.68 -6.92 L-6.92 -9.68 L-4.54 -7.54Z M6.2 0 A6.2 6.2 0 1 0 -6.2 0 A6.2 6.2 0 1 0 6.2 0Z" fill="#fff" fill-rule="evenodd" stroke="#fff" stroke-width="1.8" stroke-linejoin="round"/></svg>
<div class="t " style="left:1201.20px;top:1351.04px;font-size:23.84px;font-weight:bold;color:#fff;transform:scaleX(0.9046);">Options</div>
<svg style="left:1298px;top:1346.4px" width="21" height="11" viewBox="0 0 21 11"><path d="M0 0 H20.6 L10.3 10.4Z" fill="#fff"/></svg>
<div class="a" style="left:1347px;top:901px;width:279px;height:480.5px;background:#272a33;border:1.5px solid #3b3e4b;border-radius:7px;"></div>
<div class="a" style="left:1347px;top:901px;width:279px;height:44px;background:#3b3e4b;border-radius:7px 7px 0 0;"></div>
<svg style="left:1351.0px;top:910.3px" width="28" height="28" viewBox="0 0 28 28"><path d="M0 0 H18.7 V15.5 H0Z M1.7 4.5 V14 H17 V4.5Z" fill="#fff" fill-rule="evenodd"/><rect x="8.5" y="11.1" width="18.6" height="15.6" fill="#3b3e4b"/><path d="M8.5 11.1 H27.1 V26.7 H8.5Z M10.2 15.7 V25.2 H25.4 V15.7Z" fill="#fff" fill-rule="evenodd"/></svg>
<div class="t " style="left:1385.40px;top:923.04px;font-size:22.97px;font-weight:bold;color:#fff;transform:scaleX(0.9238);">Scene Transitions</div>
<div class="a" style="left:1356px;top:955.7px;width:261.4000000000001px;height:61.799999999999955px;background:#3b3e4b;border-radius:7px;"></div>
<div class="a" style="left:1568.8px;top:958px;width:1.400000000000091px;height:58px;background:#1f2128;"></div>
<div class="t ui" style="left:1372.00px;top:986.69px;font-size:22.24px;font-weight:normal;color:#fff;transform:scaleX(0.8954);">Fade</div>
<svg style="left:1585.7px;top:982.7px" width="17" height="10" viewBox="0 0 17 10"><path d="M0 0 H16.5 L8.25 9.5Z" fill="#fff"/></svg>
<div class="t ui" style="left:1356.30px;top:1056.69px;font-size:23.40px;font-weight:normal;color:#fff;transform:scaleX(0.9496);">Duration</div>
<div class="a" style="left:1450.1px;top:1025.3px;width:167.30000000000018px;height:62.600000000000136px;background:#3b3e4b;border-radius:7px;"></div>
<div class="a" style="left:1568.8px;top:1027px;width:1.400000000000091px;height:59px;background:#1f2128;"></div>
<div class="a" style="left:1570.2px;top:1056.7px;width:46.799999999999955px;height:1.5px;background:#1f2128;"></div>
<div class="t ui" style="left:1469.30px;top:1057.39px;font-size:23.40px;font-weight:normal;color:#fff;transform:scaleX(0.9120);">300 ms</div>
<svg style="left:1580.4px;top:1032.2px" width="25" height="16" viewBox="0 0 27 17"><path d="M2 14.5 L13.5 3 L25 14.5" fill="none" stroke="#fff" stroke-width="2.4" stroke-linecap="round" stroke-linejoin="round"/></svg>
<svg style="left:1580.4px;top:1064.2px" width="25" height="16" viewBox="0 0 27 17"><path d="M2 2.5 L13.5 14 L25 2.5" fill="none" stroke="#fff" stroke-width="2.4" stroke-linecap="round" stroke-linejoin="round"/></svg>
<div class="a" style="left:1467.3px;top:1092.1px;width:45.100000000000136px;height:55.30000000000018px;background:#3b3e4b;border-radius:7px;"></div>
<svg style="left:1477.2px;top:1106.6px" width="25.4" height="25.4" viewBox="0 0 26 26"><path d="M13 0.5 V25.5 M0.5 13 H25.5" stroke="#fff" stroke-width="2.8"/></svg>
<svg style="left:1529.9px;top:1104.7px" width="27" height="29" viewBox="0 0 27 29"><path d="M1 3.4 C1 2.6 1.6 2.2 2.4 2.2 H8.5 C8.8 0.8 9.6 0.2 11 0.2 H16 C17.4 0.2 18.2 0.8 18.5 2.2 H24.6 C25.4 2.2 26 2.6 26 3.4 V5.4 H1Z" fill="#9a9a9a"/><path d="M3.5 7.2 V23 C3.5 26.2 5.2 27.6 8 27.6 H19 C21.8 27.6 23.5 26.2 23.5 23 V7.2" fill="none" stroke="#9a9a9a" stroke-width="3"/><path d="M9.9 8.5 V21.5 M13.5 8.5 V21.5 M17.1 8.5 V21.5" stroke="#9a9a9a" stroke-width="1.9"/></svg>
<div class="a" style="left:1591.1000000000001px;top:1105.3000000000002px;width:7.2px;height:7.2px;border-radius:50%;background:#9a9a9a"></div>
<div class="a" style="left:1591.1000000000001px;top:1115.8000000000002px;width:7.2px;height:7.2px;border-radius:50%;background:#9a9a9a"></div>
<div class="a" style="left:1591.1000000000001px;top:1126.3000000000002px;width:7.2px;height:7.2px;border-radius:50%;background:#9a9a9a"></div>
<div class="a" style="left:1634px;top:901px;width:376px;height:480.5px;background:#272a33;border:1.5px solid #3b3e4b;border-radius:7px;"></div>
<div class="a" style="left:1634px;top:901px;width:376px;height:44px;background:#3b3e4b;border-radius:7px 7px 0 0;"></div>
<svg style="left:1637.9px;top:910.3px" width="28" height="28" viewBox="0 0 28 28"><path d="M0 0 H18.7 V15.5 H0Z M1.7 4.5 V14 H17 V4.5Z" fill="#fff" fill-rule="evenodd"/><rect x="8.5" y="11.1" width="18.6" height="15.6" fill="#3b3e4b"/><path d="M8.5 11.1 H27.1 V26.7 H8.5Z M10.2 15.7 V25.2 H25.4 V15.7Z" fill="#fff" fill-rule="evenodd"/></svg>
<div class="t " style="left:1671.90px;top:923.04px;font-size:22.97px;font-weight:bold;color:#fff;transform:scaleX(0.9186);">Controls</div>
<div class="a" style="left:1645.4px;top:955px;width:347.39999999999986px;height:62.799999999999955px;background:#3b3e4b;border-radius:7px;"></div>
<div class="t ui" style="left:1743.50px;top:987.14px;font-size:22.67px;font-weight:normal;color:#fff;transform:scaleX(0.9595);">Start Streaming</div>
<div class="a" style="left:1645.4px;top:1025.2px;width:347.39999999999986px;height:62.799999999999955px;background:#3b3e4b;border-radius:7px;"></div>
<div class="t ui" style="left:1744.40px;top:1057.34px;font-size:22.67px;font-weight:normal;color:#fff;transform:scaleX(0.9480);">Start Recording</div>
<div class="a" style="left:1645.4px;top:1095px;width:277.0999999999999px;height:62.799999999999955px;background:#3b3e4b;border-radius:7px;"></div>
<div class="t ui" style="left:1685.90px;top:1127.14px;font-size:22.67px;font-weight:normal;color:#fff;transform:scaleX(0.9557);">Start Virtual Camera</div>
<div class="a" style="left:1645.4px;top:1165px;width:347.39999999999986px;height:62.799999999999955px;background:#3b3e4b;border-radius:7px;"></div>
<div class="t ui" style="left:1756.50px;top:1197.14px;font-size:22.67px;font-weight:normal;color:#fff;transform:scaleX(0.9747);">Studio Mode</div>
<div class="a" style="left:1645.4px;top:1235px;width:347.39999999999986px;height:62.799999999999955px;background:#3b3e4b;border-radius:7px;"></div>
<div class="t ui" style="left:1780.60px;top:1267.14px;font-size:22.67px;font-weight:normal;color:#fff;transform:scaleX(0.9382);">Settings</div>
<div class="a" style="left:1930px;top:1095px;width:63px;height:62.799999999999955px;background:#3b3e4b;border-radius:7px;"></div>
<svg style="left:1948px;top:1113.4px" width="26" height="26" viewBox="-14 -14 28 28"><path d="M-2.17 -8.73 L-1.95 -11.74 L1.95 -11.74 L2.17 -8.73 L4.64 -7.71 L6.92 -9.68 L9.68 -6.92 L7.71 -4.64 L8.73 -2.17 L11.74 -1.95 L11.74 1.95 L8.73 2.17 L7.71 4.64 L9.68 6.92 L6.92 9.68 L4.64 7.71 L2.17 8.73 L1.95 11.74 L-1.95 11.74 L-2.17 8.73 L-4.64 7.71 L-6.92 9.68 L-9.68 6.92 L-7.71 4.64 L-8.73 2.17 L-11.74 1.95 L-11.74 -1.95 L-8.73 -2.17 L-7.71 -4.64 L-9.68 -6.92 L-6.92 -9.68 L-4.64 -7.71Z M6.0 0 A6.0 6.0 0 1 0 -6.0 0 A6.0 6.0 0 1 0 6.0 0Z" fill="#fff" fill-rule="evenodd" stroke="#fff" stroke-width="1.8" stroke-linejoin="round"/></svg>
<div class="a" style="left:0px;top:1388.3px;width:2000px;height:43.700000000000045px;background:#272a33;"></div>
<div class="a" style="left:0px;top:1388.3px;width:2000px;height:1.2999999999999545px;background:#3b3e4b;"></div>
<div class="a" style="left:1292.8000000000002px;top:1390px;width:1.199999999999818px;height:42px;background:#3b3e4b;"></div>
<div class="a" style="left:1347.0px;top:1390px;width:1.199999999999818px;height:42px;background:#3b3e4b;"></div>
<div class="a" style="left:1502.4px;top:1390px;width:1.199999999999818px;height:42px;background:#3b3e4b;"></div>
<div class="a" style="left:1658.0px;top:1390px;width:1.199999999999818px;height:42px;background:#3b3e4b;"></div>
<div class="a" style="left:1783.4px;top:1390px;width:1.199999999999818px;height:42px;background:#3b3e4b;"></div>
<div class="a" style="left:1306.6px;top:1420px;width:6.400000000000091px;height:7px;background:#555a66;border-radius:2px;"></div>
<div class="a" style="left:1314px;top:1413px;width:5.599999999999909px;height:14px;background:#555a66;border-radius:2px;"></div>
<div class="a" style="left:1321px;top:1406.6px;width:5.599999999999909px;height:20.40000000000009px;background:#555a66;border-radius:2px;"></div>
<div class="a" style="left:1328px;top:1402px;width:5.400000000000091px;height:25px;background:#555a66;border-radius:2px;"></div>
<svg style="left:1360px;top:1401px" width="29" height="28" viewBox="0 0 29 28"><circle cx="14.5" cy="13.5" r="4.6" fill="#7d8089"/><path d="M9.7 7.75 A7.5 7.5 0 0 0 9.7 19.25 M19.3 7.75 A7.5 7.5 0 0 1 19.3 19.25" fill="none" stroke="#5a5d67" stroke-width="2.3" stroke-linecap="round"/><path d="M6.8 4.3 A12 12 0 0 0 6.8 22.7 M22.2 4.3 A12 12 0 0 1 22.2 22.7" fill="none" stroke="#3a3d47" stroke-width="2.8" stroke-linecap="round"/></svg>
<div class="t ui" style="left:1406.40px;top:1415.05px;font-size:21.80px;font-weight:normal;color:#a8a8a4;transform:scaleX(0.9609);">00:00:00</div>
<div class="a" style="left:1518px;top:1402.6px;width:24px;height:24px;border-radius:50%;background:#555a66"></div>
<div class="t ui" style="left:1562.00px;top:1415.05px;font-size:21.80px;font-weight:normal;color:#a8a8a4;transform:scaleX(0.9585);">00:00:00</div>
<div class="t ui" style="left:1672.00px;top:1415.49px;font-size:22.24px;font-weight:normal;color:#ececec;transform:scaleX(0.8875);">CPU: 2.7%</div>
<div class="t ui" style="left:1797.50px;top:1415.49px;font-size:22.24px;font-weight:normal;color:#ececec;transform:scaleX(0.9189);">30.00 / 30.00 FPS</div>
<div class="a" style="left:1134px;top:76px;width:444px;height:3px;background:#ff0000;"></div>
<div class="a" style="left:1134px;top:737px;width:444px;height:3.7999999999999545px;background:#ff0000;"></div>
<div class="a" style="left:1134px;top:76px;width:4px;height:664.8px;background:#ff0000;"></div>
<div class="a" style="left:1575px;top:76px;width:3px;height:664.8px;background:#ff0000;"></div>
<div class="a" style="left:353px;top:406px;width:783px;height:3.5px;background:#ff0000;"></div>
<div class="a" style="left:1583px;top:406px;width:36px;height:3.5px;background:#ff0000;"></div>
<div class="a" style="left:1354.4px;top:45.1px;width:3.599999999999909px;height:30.9px;background:#ff0000;"></div>
<div class="a" style="left:1354.4px;top:745px;width:3.599999999999909px;height:21.600000000000023px;background:#ff0000;"></div>
<div class="a" style="left:1129px;top:70.6px;width:14px;height:14.0px;background:#ff0000;"></div>
<div class="a" style="left:1129px;top:731.9px;width:14px;height:14.0px;background:#ff0000;"></div>
<div class="a" style="left:1349.3px;top:70.6px;width:14.0px;height:14.0px;background:#ff0000;"></div>
<div class="a" style="left:1349.3px;top:731.9px;width:14.0px;height:14.0px;background:#ff0000;"></div>
<div class="a" style="left:1569.3px;top:70.6px;width:14.0px;height:14.0px;background:#ff0000;"></div>
<div class="a" style="left:1569.3px;top:731.9px;width:14.0px;height:14.0px;background:#ff0000;"></div>
<div class="a" style="left:1129px;top:401px;width:14px;height:14px;background:#ff0000;"></div>
<div class="a" style="left:1569.3px;top:401px;width:14.0px;height:14px;background:#ff0000;"></div>
<div class="t " style="left:1369.00px;top:63.98px;font-size:28.63px;font-weight:bold;color:#fff;transform:scaleX(0.9760);text-shadow:-1.5px -1.5px 0 #000,1.5px -1.5px 0 #000,-1.5px 1.5px 0 #000,1.5px 1.5px 0 #000,0 -1.8px 0 #000,0 1.8px 0 #000,-1.8px 0 0 #000,1.8px 0 0 #000;">35 px</div>
<div class="t " style="left:694.70px;top:392.28px;font-size:29.51px;font-weight:bold;color:#fff;transform:scaleX(0.9516);text-shadow:-1.5px -1.5px 0 #000,1.5px -1.5px 0 #000,-1.5px 1.5px 0 #000,1.5px 1.5px 0 #000,0 -1.8px 0 #000,0 1.8px 0 #000,-1.8px 0 0 #000,1.8px 0 0 #000;">1189 px</div>
<div class="t " style="left:1561.80px;top:392.78px;font-size:28.34px;font-weight:bold;color:#fff;transform:scaleX(0.9735);text-shadow:-1.5px -1.5px 0 #000,1.5px -1.5px 0 #000,-1.5px 1.5px 0 #000,1.5px 1.5px 0 #000,0 -1.8px 0 #000,0 1.8px 0 #000,-1.8px 0 0 #000,1.8px 0 0 #000;">62 px</div>
<div class="t " style="left:1369.10px;top:749.78px;font-size:28.63px;font-weight:bold;color:#fff;transform:scaleX(0.9719);text-shadow:-1.5px -1.5px 0 #000,1.5px -1.5px 0 #000,-1.5px 1.5px 0 #000,1.5px 1.5px 0 #000,0 -1.8px 0 #000,0 1.8px 0 #000,-1.8px 0 0 #000,1.8px 0 0 #000;">39 px</div>
<div class="t " style="left:549.40px;top:506.04px;font-size:44.04px;font-weight:normal;color:#f5413a;transform:scaleX(0.9319);">Click Here</div>
<svg style="left:0;top:0" width="2000" height="1432" viewBox="0 0 2000 1432"><line x1="600.6" y1="562.8" x2="489.2" y2="752.3" stroke="#ff2a00" stroke-width="8"/><path d="M476.8 773.3 L479.8 725.7 L517.6 747.8 Z" fill="#ff2a00"/><rect x="348.5" y="780.2" width="220.7" height="123.6" rx="21" ry="21" fill="none" stroke="#ff2a00" stroke-width="9"/></svg>
</body></html>
